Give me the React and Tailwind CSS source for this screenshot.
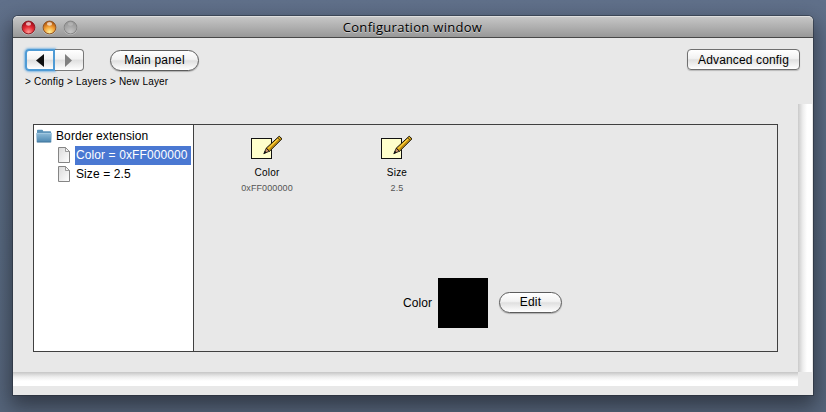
import React from "react";

const glass =
  "bg-[linear-gradient(to_bottom,#ffffff_0%,#f2f2f2_44%,#e0e0e0_52%,#efefef_75%,#ffffff_100%)]";

function Light({ id, dark, mid, glow, ring }) {
  return (
    <svg width="15" height="15" viewBox="0 0 15 15">
      <defs>
        <radialGradient id={id} cx="50%" cy="85%" r="75%">
          <stop offset="0" stopColor={glow} />
          <stop offset="0.55" stopColor={mid} />
          <stop offset="1" stopColor={dark} />
        </radialGradient>
      </defs>
      <circle cx="7.5" cy="8" r="6.9" fill="#ffffff" opacity="0.35" />
      <circle cx="7.5" cy="7.5" r="6.4" fill={`url(#${id})`} stroke={ring} />
      <ellipse cx="7.5" cy="3.900" rx="2.600" ry="1.800" fill="#fff" opacity={id === "gray" ? 0.2 : 0.65} />
    </svg>
  );
}

function FolderIcon() {
  return (
    <svg width="16" height="14" viewBox="0 0 16 14">
      <defs>
        <linearGradient id="folder" x1="0" y1="0" x2="0" y2="1">
          <stop offset="0" stopColor="#8fbcd9" />
          <stop offset="1" stopColor="#4b86b0" />
        </linearGradient>
      </defs>
      <path d="M1 4V1.6Q1 .8 1.8.8H6q.8 0 1 .8l.2.6h7q.9 0 .9.9V4z" fill="#5b93b9" />
      <path d="M.2 4h15.6l-.5 8.6q-.1.7-.8.7h-13q-.7 0-.8-.7z" fill="url(#folder)" />
      <path d="M.3 4.4h15.4" stroke="#a9cde4" strokeWidth=".8" />
      <path d="M.8 13h14.4" stroke="#3c7198" strokeWidth=".8" />
    </svg>
  );
}

function FileIcon() {
  return (
    <svg width="13" height="17" viewBox="0 0 13 17">
      <defs>
        <linearGradient id="sheet" x1="0" y1="0" x2="1" y2="1">
          <stop offset="0" stopColor="#d9d9d9" />
          <stop offset="1" stopColor="#ffffff" />
        </linearGradient>
      </defs>
      <path d="M.5 .5h7l4 4v11H.5z" fill="url(#sheet)" stroke="#858585" />
      <path d="M7.500 .5V4.500H11.500z" fill="#f5f5f5" stroke="#858585" strokeWidth=".8" />
    </svg>
  );
}

function NoteIcon() {
  return (
    <svg width="32" height="26" viewBox="0 0 32 26">
      <rect x=".5" y="3.5" width="20" height="20" fill="#ffffcc" stroke="#111" />
      <path d="M13 18.500l2.200-5.300 3.400 3z" fill="#c98f6d" stroke="#111" strokeWidth=".8" />
      <path d="M15.200 13.200L28.200 1.200L31 3.800L18.600 16.200z" fill="#dba514" stroke="#1a1608" strokeWidth="1" />
      <path d="M17.200 13.400L28.300 2.900" stroke="#ffd84c" strokeWidth="1" />
      <path d="M18.500 14.800L29.600 4" stroke="#875f08" strokeWidth=".7" />
      <path d="M26.600 2.700l2.700 2.800" stroke="#4f431d" strokeWidth="1" />
      <path d="M12.300 19.200l1.500-3.500 1.900 1.800z" fill="#111" />
    </svg>
  );
}

function Item({ name, value }) {
  return (
    <div className="flex w-[130px] flex-col items-center text-[10px] leading-[15px]">
      <NoteIcon />
      <div className="mt-[4px] tracking-[0.2px] text-black">{name}</div>
      <div className="mt-px text-[9px] tracking-[0.1px] text-[#555]">{value}</div>
    </div>
  );
}

export default function App() {
  return (
    <div className="h-[412px] w-[826px] overflow-hidden bg-[linear-gradient(to_bottom,#60708a,#586980_60%,#56657b)] pt-4 pl-[13px] font-['Liberation_Sans',Arial,sans-serif] text-[12px] text-black">
      <div className="flex h-[379px] w-[800px] flex-col rounded-t-[5px] bg-[#e8e8e8] shadow-[0_0_0_1px_rgba(35,42,52,0.5),0_9px_20px_3px_rgba(24,28,34,0.58)]">
        <div className="flex h-[22px] shrink-0 items-center rounded-t-[5px] border-t border-b border-t-[#dedede] border-b-[#484848] bg-[linear-gradient(to_bottom,#c6c6c6,#989898)] pl-2">
          <div className="flex w-[57px] gap-[6px]">
            <Light id="red" dark="#a50d1c" mid="#e52c35" glow="#ff9b95" ring="#8d2027" />
            <Light id="amber" dark="#b55a10" mid="#f3a136" glow="#fff19a" ring="#8e5525" />
            <Light id="gray" dark="#999999" mid="#aaaaaa" glow="#c4c4c4" ring="#858585" />
          </div>
          <div className="w-[669px] text-center font-['Open_Sans','Noto_Sans',sans-serif] text-[13px] leading-5 tracking-[0.3px] [text-shadow:0_1px_0_rgba(255,255,255,0.45)]">
            Configuration window
          </div>
        </div>

        <div className="h-[66px] shrink-0 pr-[13px] pl-3 pt-[11px]">
          <div className="flex items-start">
            <div className="flex h-[22px] w-[59px]">
              <div className={`flex w-[30px] items-center justify-center rounded-l-[4px] border-2 border-[#4f9bd5] shadow-[0_0_2px_1px_rgba(90,165,225,0.7)] ${glass}`}>
                <svg width="8" height="13" viewBox="0 0 8 13"><path d="M8 0v13L0 6.500z" fill="#111" /></svg>
              </div>
              <div className={`flex flex-1 items-center rounded-r-[4px] border border-l-0 border-[#777] pl-[10px] ${glass}`}>
                <svg width="7" height="13" viewBox="0 0 7 13"><path d="M0 0v13l7-6.500z" fill="#808080" /></svg>
              </div>
            </div>
            <div className={`ml-[26px] mt-px h-[21px] w-[89px] rounded-full border border-[#5c5c5c] text-center leading-[19px] tracking-[0.2px] shadow-[0_1px_1px_rgba(0,0,0,0.25)] ${glass}`}>
              Main panel
            </div>
            <div className={`ml-auto h-[21px] w-[113px] rounded-[4px] border border-[#707070] text-center leading-[20px] tracking-[0.15px] shadow-[0_1px_1px_rgba(0,0,0,0.2)] ${glass}`}>
              Advanced config
            </div>
          </div>
          <div className="mt-[4px] text-[10px] leading-[14px] tracking-[0.18px]">&gt; Config &gt; Layers &gt; New Layer</div>
        </div>

        <div className="flex h-[268px] shrink-0">
          <div className="w-[785px] py-5 pl-5">
            <div className="flex h-[228px] w-[745px] border border-[#404040]">
              <div className="w-[160px] shrink-0 border-r border-[#404040] bg-white pl-[2px] pt-px tracking-[0.1px]">
                <div className="flex h-5 items-center gap-1">
                  <FolderIcon />
                  <span className="h-5 leading-[21px]">Border extension</span>
                </div>
                <div className="flex h-[19px] items-center gap-1 pl-[22px]">
                  <FileIcon />
                  <span className="h-[19px] w-[116px] shrink-0 bg-[#4a78d2] pl-px leading-[18px] text-white">Color = 0xFF000000</span>
                </div>
                <div className="flex h-[19px] items-center gap-[5px] pl-[22px]">
                  <FileIcon />
                  <span className="h-[19px] leading-[18px]">Size = 2.5</span>
                </div>
              </div>
              <div className="flex-1">
                <div className="flex pl-[8px] pt-[10px]">
                  <Item name="Color" value="0xFF000000" />
                  <Item name="Size" value="2.5" />
                </div>
                <div className="mt-[82px] flex items-center pl-[209px]">
                  <span className="w-[35px] tracking-[0.1px]">Color</span>
                  <div className="h-[50px] w-[50px] bg-black" />
                  <div className={`mb-[2px] ml-[11px] h-[21px] w-[63px] rounded-full border border-[#5c5c5c] text-center leading-[18px] tracking-[0.2px] shadow-[0_1px_1px_rgba(0,0,0,0.25)] ${glass}`}>
                    Edit
                  </div>
                </div>
              </div>
            </div>
          </div>
          <div className="w-[15px] border-r border-r-[#e8e8e8] bg-[linear-gradient(to_right,#cacaca,#eeeeee_35%,#ffffff_65%)]" />
        </div>
        <div className="h-[14px] w-[785px] shrink-0 bg-[linear-gradient(to_bottom,#c6c6c6,#eeeeee_35%,#ffffff_65%)]" />
      </div>
    </div>
  );
}
